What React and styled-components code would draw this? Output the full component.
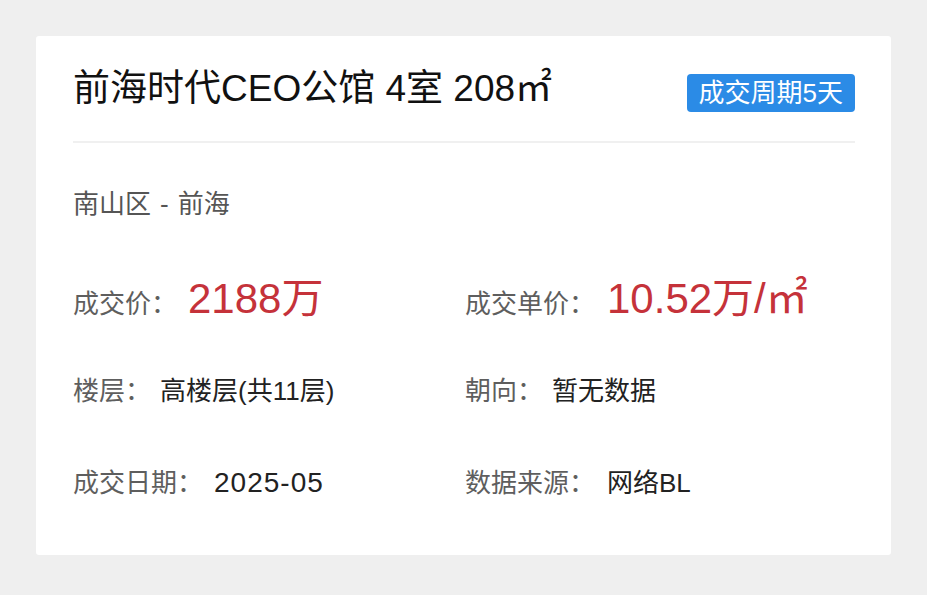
import React from "react";
import styled, { createGlobalStyle } from "styled-components";

const Global = createGlobalStyle`
  html, body { margin: 0; padding: 0; background: #efefef; }
  body { font-family: "Liberation Sans", "Noto Sans CJK SC", sans-serif; }
`;

const Page = styled.div`
  padding: 36px;
  min-height: 595px;
  box-sizing: border-box;
`;

const Card = styled.div`
  width: 855px;
  background: #fff;
  border-radius: 3px;
  padding: 0 36px 47px 37px;
  box-sizing: border-box;
`;

const Header = styled.div`
  display: flex;
  align-items: center;
  justify-content: space-between;
  padding: 28px 0 27px;
  border-bottom: 2px solid #f0f0f0;
`;

const Title = styled.h1`
  margin: 0;
  font-size: 37px;
  line-height: 50px;
  font-weight: 400;
  color: #111;
`;

const Badge = styled.span`
  margin-top: 8px;
  background: #2b8be6;
  color: #fff;
  font-size: 26px;
  line-height: 38px;
  padding: 0 12px;
  border-radius: 4px;
`;

const Location = styled.div`
  margin-top: 43px;
  font-size: 26px;
  line-height: 36px;
  color: #555;
`;

const Dash = styled.span`
  margin: 0 9px;
`;

const Grid = styled.div`
  margin-top: 52px;
  display: grid;
  grid-template-columns: 392px 1fr;
  row-gap: 42px;
`;

const Item = styled.div`
  display: flex;
  align-items: baseline;
  height: 50px;
  line-height: 50px;
  white-space: nowrap;
`;

const Label = styled.span`
  font-size: 26px;
  color: #5e5e5e;
  margin-right: ${(p) => p.$gap || 10}px;
`;

const Value = styled.span`
  font-size: ${(p) => (p.$price ? 42 : p.$size || 26)}px;
  color: ${(p) => (p.$price ? "#c5323a" : "#222")};
  letter-spacing: ${(p) => p.$track || 0}px;
`;

const items = [
  { label: "成交价：", value: "2188万", price: true, gap: 11 },
  { label: "成交单价：", value: "10.52万/㎡", price: true, gap: 12 },
  { label: "楼层：", value: "高楼层(共11层)", gap: 9 },
  { label: "朝向：", value: "暂无数据", gap: 9 },
  { label: "成交日期：", value: "2025-05", gap: 11, size: 28, track: 1 },
  { label: "数据来源：", value: "网络BL", gap: 12 },
];

export default function App() {
  return (
    <>
      <Global />
      <Page>
        <Card>
          <Header>
            <Title>前海时代CEO公馆 4室 208㎡</Title>
            <Badge>成交周期5天</Badge>
          </Header>
          <Location>
            南山区<Dash>-</Dash>前海
          </Location>
          <Grid>
            {items.map((it) => (
              <Item key={it.label}>
                <Label $gap={it.gap}>{it.label}</Label>
                <Value $price={it.price} $size={it.size} $track={it.track}>
                  {it.value}
                </Value>
              </Item>
            ))}
          </Grid>
        </Card>
      </Page>
    </>
  );
}
